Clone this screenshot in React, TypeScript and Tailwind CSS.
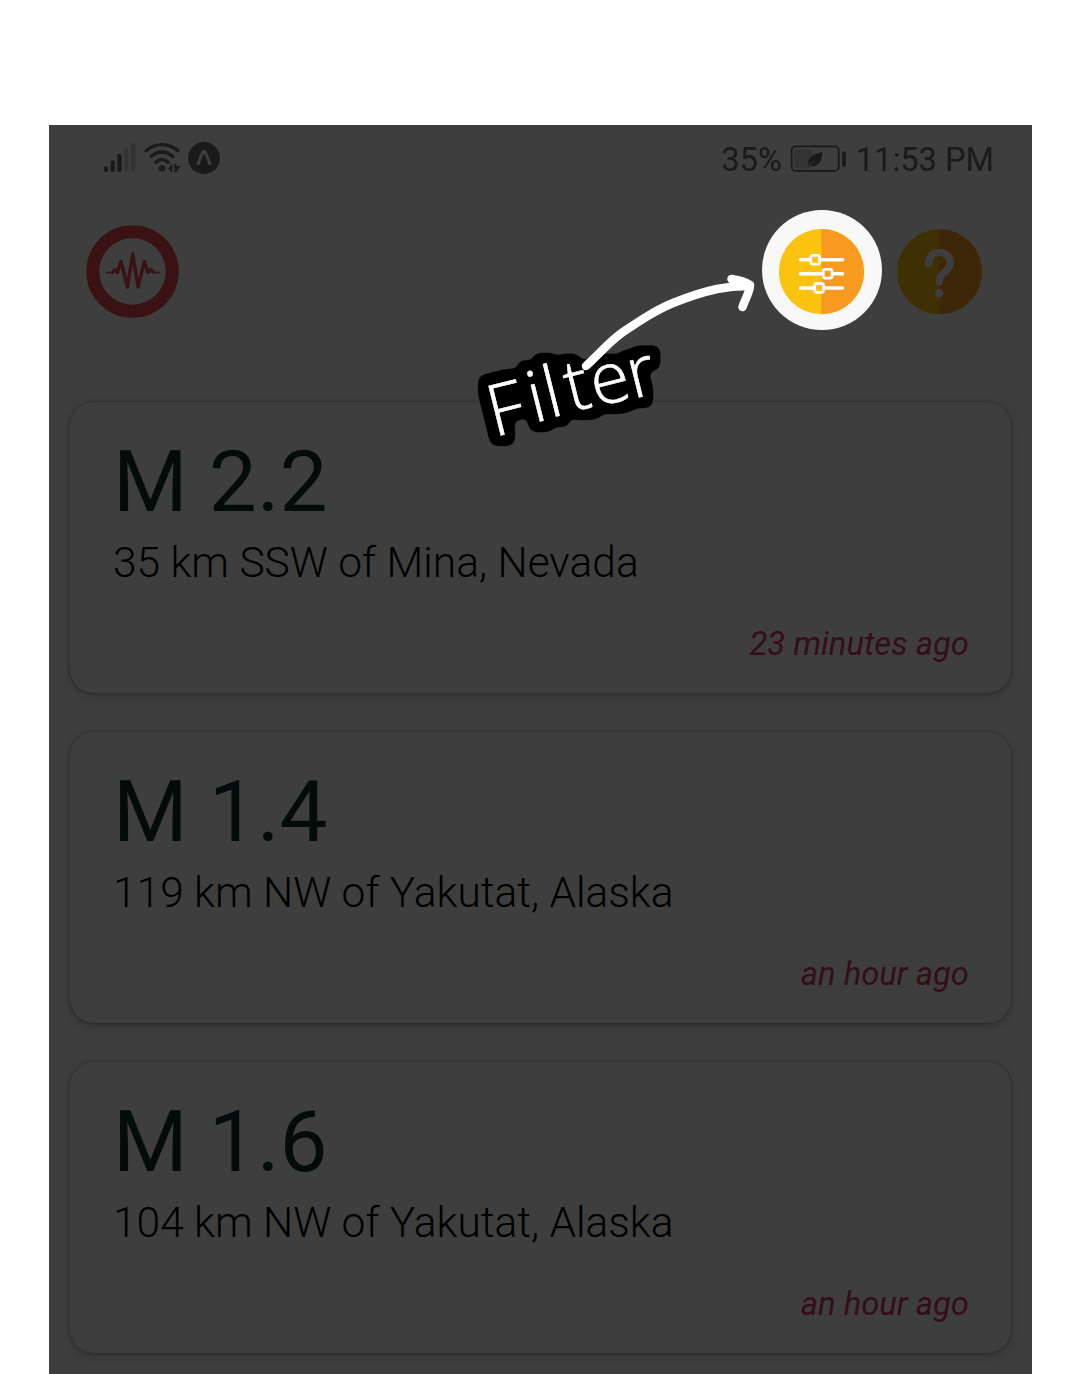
import React from "react";

type Quake = { magnitude: string; place: string; time: string };

const quakes: Quake[] = [
  { magnitude: "M 2.2", place: "35 km SSW of Mina, Nevada", time: "23 minutes ago" },
  { magnitude: "M 1.4", place: "119 km NW of Yakutat, Alaska", time: "an hour ago" },
  { magnitude: "M 1.6", place: "104 km NW of Yakutat, Alaska", time: "an hour ago" },
];

function SignalIcon() {
  return (
    <svg className="h-[32px] w-[34px]" viewBox="0 0 34 32" fill="none" strokeLinecap="round" strokeWidth="4.300">
      <path d="M3 26.500v1.500M9.700 20.500V28M16.500 14V28" stroke="#1a1a1a" />
      <path d="M23.300 8.300V28M30.200 2.800V28" stroke="#333333" />
    </svg>
  );
}

function WifiIcon() {
  return (
    <svg className="h-[32px] w-[38px]" viewBox="0 0 38 32" fill="none">
      <g stroke="#1a1a1a" strokeWidth="3.400" strokeLinecap="round">
        <path d="M2 8.800C11 .6 25 .6 34 8.800" />
        <path d="M7.200 14.500C13.500 8.400 22.500 8.400 28.800 14.500" />
        <path d="M12 20.200C15.500 16.800 20.500 16.800 24 20.200" />
      </g>
      <circle cx="18" cy="26.300" r="3.300" fill="#1a1a1a" />
      <path d="M23.300 27.500 28.400 21.500v8.500h-2.200v-2.500zM30.200 21.500h2.200v2.500h4.300L32.400 30h-2.200z" fill="#1a1a1a" />
    </svg>
  );
}

function ExpoIcon() {
  return (
    <svg className="h-[32px] w-[32px]" viewBox="0 0 32 32" fill="none">
      <circle cx="16" cy="16" r="16" fill="#1a1a1a" />
      <path d="M9.700 22.800C11.500 18 13 14 14.700 10.300Q16 8.300 17.300 10.300C19 14 20.500 18 22.300 22.800" stroke="#3e3e3e" strokeWidth="3.100" />
    </svg>
  );
}

function BatteryIcon() {
  return (
    <svg className="h-[28px] w-[57px]" viewBox="0 0 57 28" fill="none">
      <rect x="1.700" y="1.400" width="47" height="24.500" rx="4" stroke="#1a1a1a" strokeWidth="1.800" />
      <rect x="4.200" y="4.300" width="17.500" height="19" rx="2" fill="#333333" />
      <path d="M54 8v12" stroke="#1a1a1a" strokeWidth="3.800" strokeLinecap="round" />
      <path d="M32.200 7C24 8.700 18 12 18.600 17.200L18.200 21.200 20 19.200 25 14.200 20.600 20.500C26 23 32.500 18.500 32.200 7Z" fill="#1a1a1a" />
    </svg>
  );
}

function QuakeLogo() {
  return (
    <svg className="h-[93px] w-[93px]" viewBox="0 0 93 93" fill="none">
      <circle cx="46.500" cy="46.500" r="39.700" stroke="#3a1214" strokeWidth="13" />
      <g stroke="#3a1214" strokeLinejoin="round" strokeLinecap="round">
        <path d="M20.400 47.500h6M67.400 47.500h6" strokeWidth="1.500" />
        <path
          d="M26.400 47.400 29 44.500 31.400 47.500 35 36.500 41.400 62 46.700 29 52 62 58.400 36.500 62 47.500 64.600 44.500 67.400 47.400"
          strokeWidth="3.400"
        />
      </g>
    </svg>
  );
}

function FilterIcon() {
  return (
    <svg className="h-[86px] w-[86px]" viewBox="0.5 0.3 86 86" fill="none">
      <circle cx="43" cy="43" r="42.600" fill="#fcc210" />
      <path d="M43 .4a42.600 42.600 0 0 1 0 85.200z" fill="#f89a1f" />
      <g stroke="#fff" strokeWidth="3.500" strokeLinecap="round">
        <path d="M22 31h9.500M42 31h22M22 45h22M54.500 45H64M22 59.200h13.500M46 59.200h18" />
        <rect x="32.300" y="26.600" width="8.800" height="8.800" rx="2" strokeWidth="2.800" />
        <rect x="44.700" y="40.600" width="8.800" height="8.800" rx="2" strokeWidth="2.800" />
        <rect x="36.200" y="54.800" width="8.800" height="8.800" rx="2" strokeWidth="2.800" />
      </g>
    </svg>
  );
}

function HelpIcon() {
  return (
    <svg className="h-[86px] w-[86px]" viewBox="0.5 0.3 86 86" fill="none">
      <circle cx="43" cy="43" r="42.500" fill="#3f3004" />
      <path d="M43 .5a42.500 42.500 0 0 1 0 85z" fill="#3e2608" />
      <path
        d="M32 35C32 28 36.500 23.700 43 23.700S53.800 28.500 53.800 34.500C53.800 43.500 42.700 42.500 42.700 53"
        stroke="#3e3e3e"
        strokeWidth="7.400"
        strokeLinecap="round"
      />
      <circle cx="42.700" cy="64.500" r="4.300" fill="#3e3e3e" />
    </svg>
  );
}

function QuakeCard({ quake }: { quake: Quake }) {
  return (
    <article className="flex h-[291px] flex-col rounded-[24px] bg-[#3e3e3e] px-[43px] pt-[37px] shadow-[0_3px_8px_rgba(0,0,0,0.22),0_0_3px_rgba(0,0,0,0.3)]">
      <h2 className="text-[85.500px] leading-[86px] font-normal text-[#040c0b]">{quake.magnitude}</h2>
      <p className="mt-[13px] text-[42.500px] leading-[50px] font-light whitespace-nowrap text-black">{quake.place}</p>
      <p className="mt-[36px] -mr-px text-right text-[32.800px] leading-[40px] text-[#350d18] italic">{quake.time}</p>
    </article>
  );
}

function FilterCallout() {
  return (
    <svg className="pointer-events-none absolute top-[140px] left-[411px] h-[200px] w-[310px]" viewBox="0 0 310 200" fill="none">
      {/* Rounded black halo around the lettering */}
      <filter id="halo" filterUnits="userSpaceOnUse" x="0" y="60" width="230" height="140" colorInterpolationFilters="sRGB">
        <feMorphology in="SourceAlpha" operator="dilate" radius="8" />
        <feGaussianBlur stdDeviation="3.5" />
        <feComponentTransfer result="outline">
          <feFuncA type="linear" slope="9" intercept="-1.800" />
        </feComponentTransfer>
        <feMerge>
          <feMergeNode in="outline" />
          <feMergeNode in="SourceGraphic" />
        </feMerge>
      </filter>
      <text
        x="34 74 90 111 136 173"
        y="172 158 153 147 142 134"
        rotate="-14"
        fontFamily="Open Sans, sans-serif"
        fontWeight="300"
        fontSize="71"
        fill="#fff"
        stroke="#fff"
        strokeWidth="0.6"
        filter="url(#halo)"
      >
        Filter
      </text>
      <g stroke="#fff" strokeWidth="8.500" strokeLinecap="round" strokeLinejoin="round">
        <path d="M126 101C140 88 150 76 163 67C181 55 196 45 213 38C228 32 243 27 257 24C267 22 276 21 288 21" />
        <path d="M271.500 14C278 15 286 17 290 20C290 27 285 34 282.500 42" />
      </g>
    </svg>
  );
}

export default function App() {
  return (
    <div className="h-[1374px] w-[1080px] overflow-hidden bg-white pt-[125px] pl-[49px] font-[Roboto,sans-serif]">
      <main className="relative h-[1249px] w-[983px] overflow-hidden bg-[#3e3e3e]">
        <div className="flex h-[66px] items-center justify-between pr-[38px] pl-[54px] text-[32.600px] text-[#1a1a1a]">
          <div className="flex items-center">
            <SignalIcon />
            <span className="ml-[7px] flex"><WifiIcon /></span>
            <span className="ml-[6px] flex"><ExpoIcon /></span>
          </div>
          <div className="flex items-center pt-[2px]">
            <span className="pt-[3px]">35%</span>
            <span className="mr-[9px] ml-[8px] flex"><BatteryIcon /></span>
            <span className="pt-[3px]">11:53 PM</span>
          </div>
        </div>
        <header className="flex h-[160px] items-center justify-between pr-[49px] pl-[37px]">
          <QuakeLogo />
          <div className="flex items-center">
            <button className="-mt-[2px] flex h-[120px] w-[120px] items-center justify-center rounded-full bg-[#f8f8f8] pt-[3px]">
              <FilterIcon />
            </button>
            <button className="ml-[15px] flex pt-[1px]"><HelpIcon /></button>
          </div>
        </header>
        <section className="mt-[51px] flex flex-col gap-[39px] px-[21px]">
          {quakes.map((q) => (
            <QuakeCard key={q.place} quake={q} />
          ))}
        </section>
        <FilterCallout />
      </main>
    </div>
  );
}
